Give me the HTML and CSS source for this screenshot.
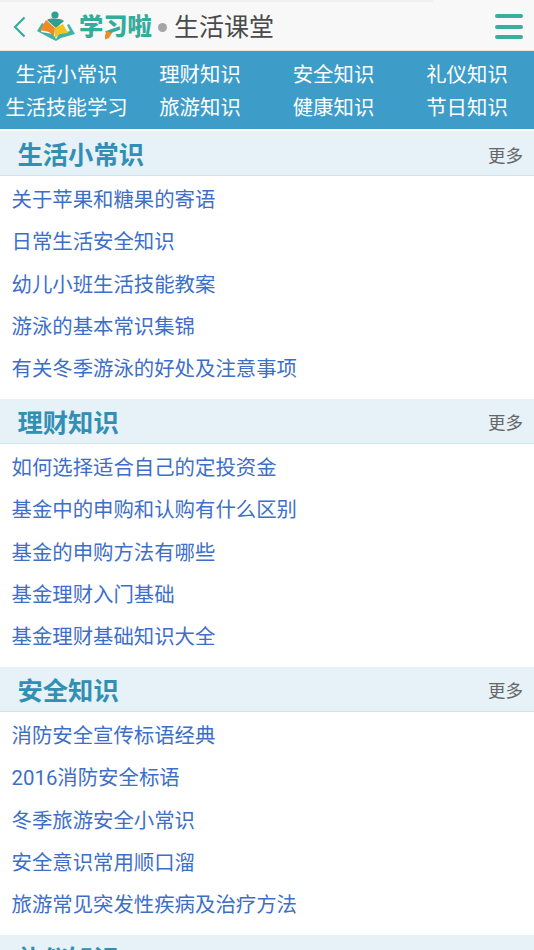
FILE: index.html
```html
<!DOCTYPE html>
<html lang="zh-CN">
<head>
<meta charset="utf-8">
<title>生活课堂</title>
<link rel="stylesheet" href="styles.css">
</head>
<body>
<header class="topbar">
  <svg class="back" width="13" height="22" viewBox="0 0 13 22"><path d="M11.500 1.500 2 11l9.500 9.500" fill="none" stroke="#35ab9b" stroke-width="2.200"/></svg>
  <svg class="book" width="38" height="30" viewBox="0 0 38 30">
    <circle cx="18" cy="4" r="3.600" fill="#2f9f90"/>
    <path d="M10 9c3-2 13-2 17 1l-8 7z" fill="#2f9f90"/>
    <path d="M0 20 5 12l2 1-3 8 12 2 3 5 3-5 11-3-3-6 2-1 6 10-14 4-5 3-6-3z" fill="#3fb3a3"/>
    <path d="M3 19 9 9l9 8-1 8-5-4z" fill="#f08a24"/>
    <path d="M18 17l8-4 5 9-8 1-5 4z" fill="#f4c320"/>
  </svg>
  <span class="brand">学习啦<svg class="pencil" width="9" height="10" viewBox="0 0 9 10"><path d="M3 1 8 3 5 8 1 9.500 1 5z" fill="#f08a24"/></svg></span>
  <span class="dot"></span>
  <h1 class="page-title">生活课堂</h1>
  <div class="menu"><i></i><i></i><i></i></div>
</header>
<nav class="nav">
  <a>生活小常识</a><a>理财知识</a><a>安全知识</a><a>礼仪知识</a>
  <a>生活技能学习</a><a>旅游知识</a><a>健康知识</a><a>节日知识</a>
</nav>
<main>
  <section class="sec">
    <div class="sec-head"><h2>生活小常识</h2><span>更多</span></div>
    <ul>
      <li>关于苹果和糖果的寄语</li>
      <li>日常生活安全知识</li>
      <li>幼儿小班生活技能教案</li>
      <li>游泳的基本常识集锦</li>
      <li>有关冬季游泳的好处及注意事项</li>
    </ul>
  </section>
  <section class="sec">
    <div class="sec-head"><h2>理财知识</h2><span>更多</span></div>
    <ul>
      <li>如何选择适合自己的定投资金</li>
      <li>基金中的申购和认购有什么区别</li>
      <li>基金的申购方法有哪些</li>
      <li>基金理财入门基础</li>
      <li>基金理财基础知识大全</li>
    </ul>
  </section>
  <section class="sec">
    <div class="sec-head"><h2>安全知识</h2><span>更多</span></div>
    <ul>
      <li>消防安全宣传标语经典</li>
      <li>2016消防安全标语</li>
      <li>冬季旅游安全小常识</li>
      <li>安全意识常用顺口溜</li>
      <li>旅游常见突发性疾病及治疗方法</li>
    </ul>
  </section>
  <section class="sec">
    <div class="sec-head"><h2>礼仪知识</h2><span>更多</span></div>
  </section>
</main>
</body>
</html>
```

FILE: styles.css
```css
* { box-sizing: border-box; }
html, body { margin: 0; padding: 0; height: 950px; overflow: hidden; background: #fff; }
body { font-family: Roboto, "Noto Sans CJK SC", sans-serif; }
h1, h2, ul { margin: 0; padding: 0; font-weight: normal; }
li { list-style: none; }

.topbar {
  height: 51px;
  display: flex;
  align-items: center;
  padding: 3px 0 0 12.500px;
  background: linear-gradient(#eff1f1, #eff1f1) no-repeat 0 0 / 433px 2px, #f8f8f8;
  border-bottom: 1px solid #e6e8e8;
}
.back { flex: none; }
.book { flex: none; margin: -1px 0 0 11px; }
.brand {
  position: relative;
  margin-left: 4.500px;
  font-size: 24.300px;
  font-weight: 900;
  color: #35ab9b;
  line-height: 30px;
  white-space: nowrap;
}
.pencil { position: absolute; left: 25px; top: 18px; }
.dot { flex: none; width: 9px; height: 9px; margin: 2px 0 0 6px; border-radius: 50%; background: #a5a5a5; }
.page-title { margin: 2px 0 0 7px; font-size: 25px; line-height: 32px; color: #4a4a4a; }
.menu { margin-left: auto; margin-right: 11px; width: 28px; display: flex; flex-direction: column; gap: 6.500px; }
.menu i { display: block; height: 4px; border-radius: 2px; background: #3aae9e; }

.nav {
  height: 78px;
  padding: 7px 0 5px;
  display: grid;
  grid-template-columns: repeat(4, 1fr);
  grid-auto-rows: 33px;
  align-items: center;
  background: #3d9dc8;
}
.nav a { padding-top: 2px; margin-left: -0.500px; text-align: center; font-size: 20.400px; line-height: 31px; color: #fff; white-space: nowrap; }

.sec { margin-bottom: 8.500px; }
.sec:first-child { padding-top: 2px; }
.sec-head {
  height: 45px;
  padding: 0 11px 0 17.500px;
  display: flex;
  align-items: center;
  justify-content: space-between;
  background: #e6f1f8;
  border-bottom: 1px solid #cfe2ee;
}
.sec-head h2 { margin-top: 6px; font-size: 25.300px; font-weight: 700; color: #328fb4; line-height: 34px; }
.sec-head span { font-size: 17.500px; color: #666; line-height: 24px; padding-top: 5px; }
.sec ul { padding-top: 3px; }
.sec li {
  height: 42.300px;
  padding-left: 11.500px;
  font-size: 20.400px;
  line-height: 42px;
  color: #3e6fc8;
  white-space: nowrap;
}
```
